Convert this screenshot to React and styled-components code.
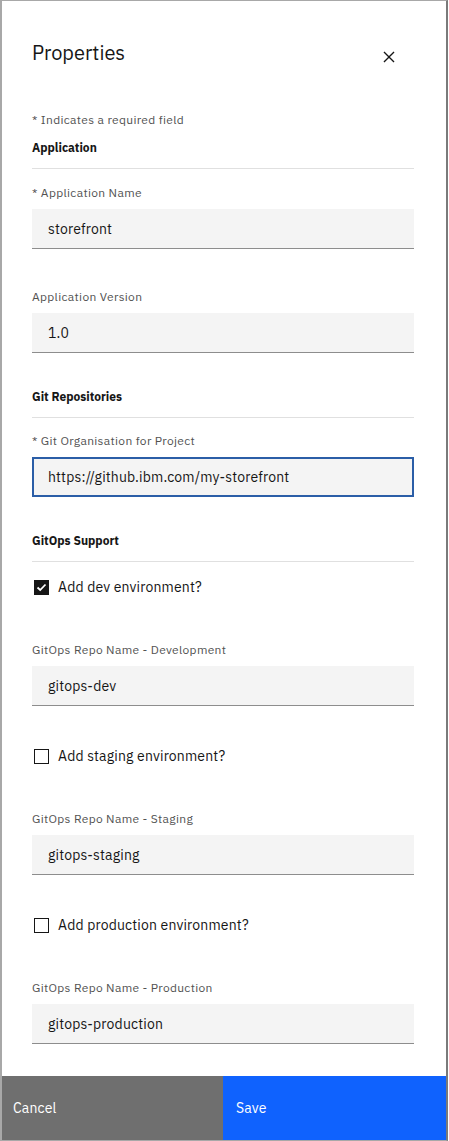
import styled, { createGlobalStyle } from "styled-components";

const GlobalStyle = createGlobalStyle`
  html, body {
    margin: 0;
    padding: 0;
    background: #ffffff;
  }
  body {
    font-family: "IBM Plex Sans", "Noto Sans", Arial, sans-serif;
    color: #161616;
  }
  * {
    box-sizing: border-box;
  }
`;

const fields = {
  application: [
    { label: "* Application Name", value: "storefront" },
    { label: "Application Version", value: "1.0" },
  ],
  gitops: [
    { env: "Add dev environment?", checked: true, label: "GitOps Repo Name - Development", value: "gitops-dev" },
    { env: "Add staging environment?", checked: false, label: "GitOps Repo Name - Staging", value: "gitops-staging" },
    { env: "Add production environment?", checked: false, label: "GitOps Repo Name - Production", value: "gitops-production" },
  ],
};

function CloseIcon() {
  return (
    <svg width="22" height="22" viewBox="0 0 32 32" fill="#161616">
      <path d="M24 9.4L22.6 8 16 14.6 9.4 8 8 9.4 14.6 16 8 22.6 9.4 24 16 17.4 22.6 24 24 22.6 17.4 16 24 9.4z" />
    </svg>
  );
}

function Field({ label, value, focused, spacing }) {
  return (
    <FieldGroup $spacing={spacing}>
      <Label>{label}</Label>
      <TextInput defaultValue={value} $focused={focused} readOnly />
    </FieldGroup>
  );
}

function Checkbox({ label, checked, spacing }) {
  return (
    <CheckRow $spacing={spacing}>
      <Box $checked={checked}>
        {checked && (
          <svg width="11" height="9" viewBox="0 0 11 9">
            <path d="M1.5 4.5 L4.2 7 L9.5 1.5" stroke="#fff" strokeWidth="1.8" fill="none" />
          </svg>
        )}
      </Box>
      <CheckText>{label}</CheckText>
    </CheckRow>
  );
}

export default function App() {
  return (
    <>
      <GlobalStyle />
      <Modal>
        <Body>
          <Header>
            <Title>Properties</Title>
            <CloseButton aria-label="Close">
              <CloseIcon />
            </CloseButton>
          </Header>

          <RequiredNote>* Indicates a required field</RequiredNote>

          <SectionTitle $first>Application</SectionTitle>
          {fields.application.map((f, i) => (
            <Field key={f.label} label={f.label} value={f.value} spacing={i === 0 ? 16 : 40} />
          ))}

          <SectionTitle>Git Repositories</SectionTitle>
          <Field
            label="* Git Organisation for Project"
            value="https://github.ibm.com/my-storefront"
            spacing={15}
            focused
          />

          <SectionTitle>GitOps Support</SectionTitle>
          {fields.gitops.map((f, i) => (
            <div key={f.env}>
              <Checkbox label={f.env} checked={f.checked} spacing={i === 0 ? 15 : 40} />
              <Field label={f.label} value={f.value} spacing={45} />
            </div>
          ))}
        </Body>

        <Footer>
          <FooterButton $kind="secondary">Cancel</FooterButton>
          <FooterButton $kind="primary">Save</FooterButton>
        </Footer>
      </Modal>
    </>
  );
}

const Modal = styled.section`
  width: 448px;
  height: 1141px;
  display: flex;
  flex-direction: column;
  background: #ffffff;
  border-top: 1px solid #a8a8a8;
  border-bottom: 1px solid #a8a8a8;
  border-left: 2px solid #a8a8a8;
  border-right: 2px solid #7a7a7a;
`;

const Body = styled.div`
  flex: 1;
  padding: 38px 32px 0 30px;
  display: flex;
  flex-direction: column;
`;

const Header = styled.header`
  height: 28px;
  display: flex;
  justify-content: space-between;
  align-items: flex-start;
`;

const Title = styled.h2`
  margin: 0;
  font-size: 20px;
  line-height: 28px;
  font-weight: 400;
  color: #161616;
`;

const CloseButton = styled.button`
  border: none;
  background: transparent;
  padding: 0;
  margin: 7px 14px 0 0;
  width: 22px;
  height: 22px;
  display: flex;
  cursor: pointer;
`;

const RequiredNote = styled.p`
  margin: 45px 0 0;
  font-size: 12px;
  line-height: 16px;
  letter-spacing: 0.32px;
  color: #525252;
`;

const SectionTitle = styled.h3`
  margin: ${({ $first }) => ($first ? "12px" : "36px")} 0 0;
  padding-bottom: 12px;
  border-bottom: 1px solid #e0e0e0;
  font-size: 12px;
  line-height: 16px;
  font-weight: 700;
  color: #161616;
`;

const FieldGroup = styled.div`
  margin-top: ${({ $spacing }) => $spacing}px;
  display: flex;
  flex-direction: column;
`;

const Label = styled.label`
  font-size: 12px;
  line-height: 16px;
  letter-spacing: 0.32px;
  color: #525252;
  margin-bottom: 8px;
`;

const TextInput = styled.input`
  width: 100%;
  height: 40px;
  padding: 0 16px;
  font-family: inherit;
  font-size: 14px;
  letter-spacing: 0.16px;
  color: #161616;
  background: #f4f4f4;
  border: none;
  border-bottom: 1px solid #8d8d8d;
  outline: ${({ $focused }) => ($focused ? "2px solid #2b5ea7" : "none")};
  outline-offset: -2px;
`;

const CheckRow = styled.label`
  margin-top: ${({ $spacing }) => $spacing}px;
  display: flex;
  align-items: center;
  height: 20px;
  padding-left: 2px;
`;

const Box = styled.span`
  width: 15px;
  height: 15px;
  margin-right: 9px;
  border: 1px solid #161616;
  background: ${({ $checked }) => ($checked ? "#161616" : "#ffffff")};
  display: flex;
  align-items: center;
  justify-content: center;
`;

const CheckText = styled.span`
  font-size: 14px;
  line-height: 20px;
  letter-spacing: 0.16px;
  color: #161616;
`;

const Footer = styled.footer`
  height: 64px;
  display: grid;
  grid-template-columns: 221px 1fr;
`;

const FooterButton = styled.button`
  border: none;
  margin: 0;
  padding: 0 0 0 ${({ $kind }) => ($kind === "primary" ? "13px" : "11px")};
  text-align: left;
  font-family: inherit;
  font-size: 14px;
  letter-spacing: 0.16px;
  color: #ffffff;
  background: ${({ $kind }) => ($kind === "primary" ? "#0f62fe" : "#6f6f6f")};
  cursor: pointer;
`;
